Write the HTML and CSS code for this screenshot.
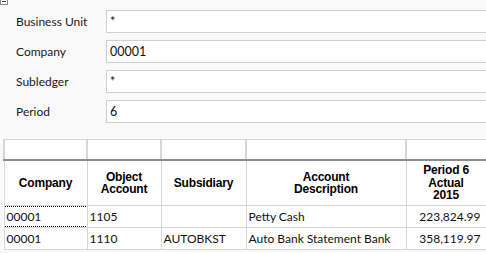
FILE: index.html
```html
<!DOCTYPE html>
<html lang="en">
<head>
    <meta charset="UTF-8">
    <title>Account Balance</title>
    <link rel="stylesheet" href="styles.css">
</head>
<body>
    <div class="collapse-icon">
        <svg width="8" height="5" viewBox="0 0 8 5"><rect x="0.5" y="-3.5" width="7" height="8" fill="#fff" stroke="#8a8a8a"/><line x1="2" y1="1.5" x2="6" y2="1.5" stroke="#333"/></svg>
    </div>
    <div class="filter-form">
        <div class="form-row">
            <label for="businessUnit">Business Unit</label>
            <input type="text" id="businessUnit" value="*">
        </div>
        <div class="form-row">
            <label for="company">Company</label>
            <input type="text" id="company" value="00001">
        </div>
        <div class="form-row">
            <label for="subledger">Subledger</label>
            <input type="text" id="subledger" value="*">
        </div>
        <div class="form-row">
            <label for="period">Period</label>
            <input type="text" id="period" value="6">
        </div>
    </div>

    <table class="grid">
        <colgroup>
            <col class="col-company">
            <col class="col-object">
            <col class="col-sub">
            <col class="col-desc">
            <col class="col-amount">
        </colgroup>
        <thead>
            <tr class="qbe-row">
                <td></td><td></td><td></td><td></td><td></td>
            </tr>
            <tr class="header-row">
                <th>Company</th>
                <th>Object<br>Account</th>
                <th>Subsidiary</th>
                <th>Account<br>Description</th>
                <th>Period 6<br>Actual<br>2015</th>
            </tr>
        </thead>
        <tbody>
            <tr>
                <td><span class="focused">00001</span></td>
                <td>1105</td>
                <td></td>
                <td>Petty Cash</td>
                <td class="num">223,824.99</td>
            </tr>
            <tr>
                <td>00001</td>
                <td>1110</td>
                <td>AUTOBKST</td>
                <td>Auto Bank Statement Bank</td>
                <td class="num">358,119.97</td>
            </tr>
        </tbody>
    </table>
</body>
</html>
```

FILE: styles.css
```css
body {
    margin: 0;
    background-color: #f9f9f9;
    font-family: 'Segoe UI', 'Lato', sans-serif;
    font-size: 12px;
    color: #1a1a1a;
    overflow: hidden;
}
.collapse-icon {
    position: absolute;
    top: 0;
    left: 0;
    line-height: 0;
}
.filter-form {
    padding-top: 10px;
    display: flex;
    flex-direction: column;
    gap: 7px;
}
.form-row {
    display: flex;
    align-items: center;
}
.form-row label {
    width: 90px;
    padding-left: 16px;
    font-size: 12px;
}
.form-row input {
    flex: 1;
    height: 23px;
    box-sizing: border-box;
    margin-right: -10px;
    padding: 0 3px;
    border: 1px solid #cfcfcf;
    background-color: #fff;
    font-family: inherit;
    font-size: 12.5px;
    color: #111;
    outline: none;
}
.grid {
    margin: 16px 0 0 3px;
    width: 482px;
    border-collapse: collapse;
    table-layout: fixed;
    background-color: #fff;
    border-top: 1px solid #a4a4a4;
    border-left: 1px solid #a4a4a4;
}
.col-company { width: 83px; }
.col-object { width: 74px; }
.col-sub { width: 85px; }
.col-desc { width: 160px; }
.col-amount { width: 80px; }
.grid td, .grid th {
    border: 1px solid #d6d6d6;
    padding: 0 2px;
    white-space: nowrap;
    overflow: hidden;
}
.qbe-row td {
    height: 19px;
    border-left-width: 2px;
    border-bottom: 2px solid #8e8e8e;
}
.header-row th {
    height: 44px;
    font-family: 'Liberation Sans', Arial, sans-serif;
    font-size: 12px;
    font-weight: bold;
    line-height: 12.5px;
    letter-spacing: -0.2px;
    color: #000;
    text-align: center;
}
.grid tbody td {
    height: 21px;
    font-size: 12px;
    color: #111;
}
.grid tbody td.num {
    text-align: right;
    padding-right: 5px;
}
.focused {
    display: block;
    margin: 0 -2px;
    padding: 0 2px;
    height: 19px;
    line-height: 19px;
    outline: 1px dotted #000;
}
```
